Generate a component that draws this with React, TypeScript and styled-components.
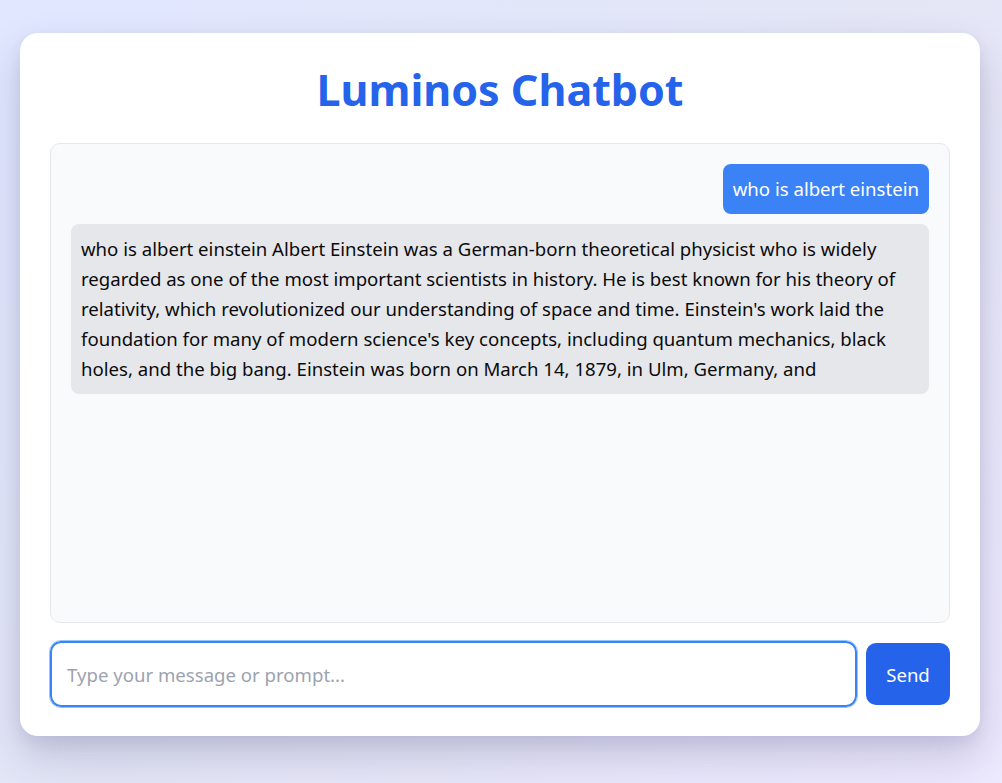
import React from "react";
import styled, { createGlobalStyle } from "styled-components";

const GlobalStyle = createGlobalStyle`
  * { box-sizing: border-box; }
  html, body { margin: 0; padding: 0; }
  body {
    min-height: 100vh;
    font-family: "Noto Sans", "Open Sans", sans-serif;
    background: linear-gradient(135deg, #e0e7ff 0%, #e4e6f6 50%, #ede9fe 100%);
  }
`;

const Page = styled.div`
  min-height: 783px;
  padding: 33px 22px 40px 20px;
  display: flex;
  justify-content: center;
  align-items: flex-start;
`;

const Card = styled.div`
  width: 960px;
  background: #ffffff;
  border-radius: 18px;
  padding: 22px 30px 29px 30px;
  box-shadow: 0 20px 40px rgba(60, 60, 110, 0.22), 0 6px 14px rgba(60, 60, 110, 0.08);
  display: flex;
  flex-direction: column;
`;

const Title = styled.h1`
  margin: 0 0 18px 0;
  text-align: center;
  font-size: 43px;
  line-height: 70px;
  font-weight: 700;
  color: #2563eb;
`;

const ChatBox = styled.div`
  height: 480px;
  background: #f9fafb;
  border: 1px solid #e5e7eb;
  border-radius: 10px;
  padding: 20px;
  display: flex;
  flex-direction: column;
  gap: 10px;
  overflow-y: auto;
`;

const Bubble = styled.div<{ $from: "user" | "bot" }>`
  align-self: ${(p) => (p.$from === "user" ? "flex-end" : "stretch")};
  background: ${(p) => (p.$from === "user" ? "#3b82f6" : "#e5e7eb")};
  color: ${(p) => (p.$from === "user" ? "#ffffff" : "#0b0b0b")};
  border-radius: 8px;
  padding: 10px;
  font-size: 18.6px;
  line-height: 30px;
`;

const InputRow = styled.div`
  display: flex;
  gap: 9px;
  margin-top: 18px;
  align-items: center;
`;

const Input = styled.input`
  flex: 1;
  height: 66px;
  border: 2px solid #3b82f6;
  border-radius: 11px;
  padding: 0 15px;
  font-family: inherit;
  font-size: 18.6px;
  color: #111827;
  outline: 1px solid #93c5fd;
  background: #fff;
  &::placeholder { color: #9ca3af; }
`;

const SendButton = styled.button`
  width: 84px;
  height: 62px;
  border: none;
  border-radius: 10px;
  background: #2563eb;
  color: #ffffff;
  font-family: inherit;
  font-size: 18.6px;
  cursor: pointer;
`;

export default function App() {
  return (
    <>
      <GlobalStyle />
      <Page>
        <Card>
          <Title>Luminos Chatbot</Title>
          <ChatBox>
            <Bubble $from="user">who is albert einstein</Bubble>
            <Bubble $from="bot">
              who is albert einstein Albert Einstein was a German-born theoretical physicist who is widely
              regarded as one of the most important scientists in history. He is best known for his theory of
              relativity, which revolutionized our understanding of space and time. Einstein's work laid the
              foundation for many of modern science's key concepts, including quantum mechanics, black
              holes, and the big bang. Einstein was born on March 14, 1879, in Ulm, Germany, and
            </Bubble>
          </ChatBox>
          <InputRow>
            <Input placeholder="Type your message or prompt..." />
            <SendButton>Send</SendButton>
          </InputRow>
        </Card>
      </Page>
    </>
  );
}
